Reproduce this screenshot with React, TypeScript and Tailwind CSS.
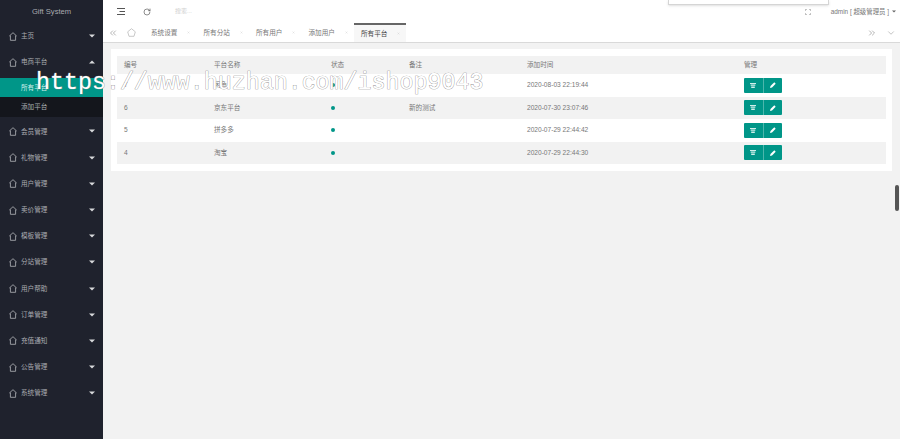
import React from 'react';
import { ChevronsLeft, ChevronsRight, ChevronDown, RotateCw, X } from 'lucide-react';

const FONT = "font-['Liberation_Sans','Noto_Sans_CJK_SC',sans-serif]";

const menuTop = ['主页', '电商平台'];
const menuRest = [
  '会员管理',
  '礼物管理',
  '用户管理',
  '卖价管理',
  '模板管理',
  '分站管理',
  '用户帮助',
  '订单管理',
  '充值通知',
  '公告管理',
  '系统管理',
];
const tabs = ['系统设置', '所有分站', '所有用户', '添加用户'];

const rows = [
  { id: '7', name: '闲鱼', note: '', time: '2020-08-03 22:19:44' },
  { id: '6', name: '京东平台', note: '新的测试', time: '2020-07-30 23:07:46' },
  { id: '5', name: '拼多多', note: '', time: '2020-07-29 22:44:42' },
  { id: '4', name: '淘宝', note: '', time: '2020-07-29 22:44:30' },
];

function HomeIcon() {
  return (
    <svg width="8" height="9" viewBox="0 0 8 9" fill="none" stroke="#b4b6ba" strokeWidth="0.8" className="shrink-0">
      <path d="M4 0.7 L7.4 3.8 L6.6 3.8 L6.6 8.3 L1.4 8.3 L1.4 3.8 L0.6 3.8 Z" />
    </svg>
  );
}

function Caret({ up }: { up?: boolean }) {
  return (
    <svg width="6" height="4" viewBox="0 0 6 4" fill="#d8d9db" className="shrink-0">
      <path d={up ? 'M0 3.5 L6 3.5 L3 0.5 Z' : 'M0 0.5 L6 0.5 L3 3.5 Z'} />
    </svg>
  );
}

function MenuItem({ label, up }: { label: string; up?: boolean }) {
  return (
    <div className="h-[26.2px] flex items-center pl-[9px] pr-[8px]">
      <HomeIcon />
      <span className="ml-[4px] text-[6.6px] text-[#a9abb0] flex-1">{label}</span>
      <Caret up={up} />
    </div>
  );
}

function Sidebar() {
  return (
    <div className="w-[103px] shrink-0 bg-[#1f222d] flex flex-col">
      <div className="h-[23px] flex items-center justify-center text-[7.6px] text-[#a9abb0]">Gift System</div>
      <MenuItem label={menuTop[0]} />
      <MenuItem label={menuTop[1]} up />
      <div className="h-[39px] mt-[3px] bg-[#14161c] flex flex-col">
        <div className="h-[19px] bg-[#009688] flex items-center pl-[21px] text-[6.6px] text-[#d5efec]">所有平台</div>
        <div className="h-[20px] flex items-center pl-[21px] text-[6.6px] text-[#a9abb0]">添加平台</div>
      </div>
      <div className="h-[1px]" />
      {menuRest.map((m) => (
        <MenuItem key={m} label={m} />
      ))}
    </div>
  );
}

function TopBar() {
  return (
    <div className="h-[23px] bg-white flex items-center pl-[14px] pr-[4px]">
      <svg width="8" height="7" viewBox="0 0 8 7" stroke="#555" strokeWidth="1" fill="none">
        <path d="M0 0.5 H8 M2.5 3.5 H8 M0 6.5 H8" />
      </svg>
      <RotateCw size={8} strokeWidth={2} className="ml-[18px] text-[#555]" />
      <span className="ml-[24px] text-[6px] text-[#d0d0d0]">搜索...</span>
      <div className="flex-1" />
      <svg width="6" height="6" viewBox="0 0 6 6" fill="none" stroke="#999" strokeWidth="0.7">
        <path d="M0.3 2 V0.3 H2 M4 0.3 H5.7 V2 M5.7 4 V5.7 H4 M2 5.7 H0.3 V4" />
      </svg>
      <span className="ml-[20px] text-[6.4px] text-[#777]">admin [ 超级管理员 ]</span>
      <div className="ml-[3px]">
        <svg width="4" height="3" viewBox="0 0 6 4" fill="#666">
          <path d="M0 0.5 L6 0.5 L3 3.5 Z" />
        </svg>
      </div>
    </div>
  );
}

function TabBar() {
  return (
    <div className="h-[20px] bg-white border-b border-[#d9d9d9] flex items-stretch text-[6.6px] text-[#777]">
      <div className="w-[24px] flex items-center pl-[5px]">
        <ChevronsLeft size={10} strokeWidth={1.5} className="text-[#888]" />
      </div>
      <div className="w-[18px] flex items-center">
        <svg width="9" height="9" viewBox="0 0 9 9" fill="none" stroke="#bbb" strokeWidth="0.8">
          <path d="M4.5 0.7 L8.3 3.8 L7 8.3 L2 8.3 L0.7 3.8 Z" />
        </svg>
      </div>
      <div className="w-[6px]" />
      {tabs.map((t) => (
        <div key={t} className="w-[52.5px] flex items-center shrink-0">
          <span>{t}</span>
          <X size={3} className="ml-[10px] text-[#bbb]" />
        </div>
      ))}
      <div className="-ml-[7px] w-[52px] bg-[#f7f7f7] border-t-2 border-[#666] flex items-center pl-[7px] text-[#444] shrink-0">
        <span>所有平台</span>
        <X size={3} className="ml-[10px] text-[#bbb]" />
      </div>
      <div className="flex-1" />
      <div className="w-[33px] flex items-center justify-between pr-[4px]">
        <ChevronsRight size={10} strokeWidth={1.5} className="text-[#888]" />
        <ChevronDown size={10} strokeWidth={1.2} className="text-[#888]" />
      </div>
    </div>
  );
}

function ActionButtons() {
  return (
    <div className="flex w-[38px] h-[15px] bg-[#009688] rounded-[1px]">
      <div className="flex-1 flex items-center justify-center border-r border-[#4db6ac]">
        <svg width="6" height="5" viewBox="0 0 6 5" fill="#cfeeea">
          <path d="M0 0 H6 V1 H0 Z M0.7 1.6 H5.3 V2.8 H0.7 Z M1.2 3.4 H4.8 V5 H1.2 Z" />
        </svg>
      </div>
      <div className="flex-1 flex items-center justify-center">
        <svg width="6" height="6" viewBox="0 0 6 6" fill="#ffffff">
          <path d="M0 6 L0.5 4 L4.3 0.3 L5.7 1.7 L2 5.5 Z" />
        </svg>
      </div>
    </div>
  );
}

const GRID = 'grid grid-cols-[90px_117px_78px_118px_217px_1fr] pl-[7px] items-center';

function PlatformTable() {
  return (
    <div className="bg-white px-[6px] pt-[7px] pb-[7px]">
      <div className={`${GRID} h-[18px] bg-[#f2f2f2] text-[6.6px] text-[#777]`}>
        <span>编号</span>
        <span>平台名称</span>
        <span>状态</span>
        <span>备注</span>
        <span>添加时间</span>
        <span>管理</span>
      </div>
      {rows.map((r, i) => (
        <div
          key={r.id}
          className={`${GRID} h-[22.5px] text-[6.6px] text-[#777] ${i % 2 === 1 ? 'bg-[#f2f2f2]' : 'bg-white'}`}
        >
          <span>{r.id}</span>
          <span>{r.name}</span>
          <span className="block w-[4px] h-[4px] rounded-full bg-[#009688]" />
          <span>{r.note}</span>
          <span>{r.time}</span>
          <ActionButtons />
        </div>
      ))}
    </div>
  );
}

export default function App() {
  return (
    <div className={`${FONT} relative w-[900px] h-[439px] overflow-hidden flex bg-[#f2f2f2]`}>
      <Sidebar />
      <div className="flex-1 flex flex-col min-w-0">
        <TopBar />
        <TabBar />
        <div className="pl-[8px] pr-[8px] pt-[6px]">
          <PlatformTable />
        </div>
      </div>

      {/* dropdown peeking in from the top */}
      <div className="absolute left-[668px] top-0 w-[161px] h-[5px] bg-white border border-t-0 border-[#d5d5d5] shadow-sm" />

      {/* scrollbar thumb */}
      <div className="absolute left-[895px] top-[185px] w-[4px] h-[26px] bg-[#555] rounded-[2px]" />

      {/* watermark */}
      <div className="absolute left-[36px] top-[69px] font-['Liberation_Mono',monospace] text-[23.3px] leading-[28px] text-white [-webkit-text-stroke:0.7px_#8a8a8a] [paint-order:stroke_fill] whitespace-nowrap">
        https://www.huzhan.com/ishop9043
      </div>
    </div>
  );
}
